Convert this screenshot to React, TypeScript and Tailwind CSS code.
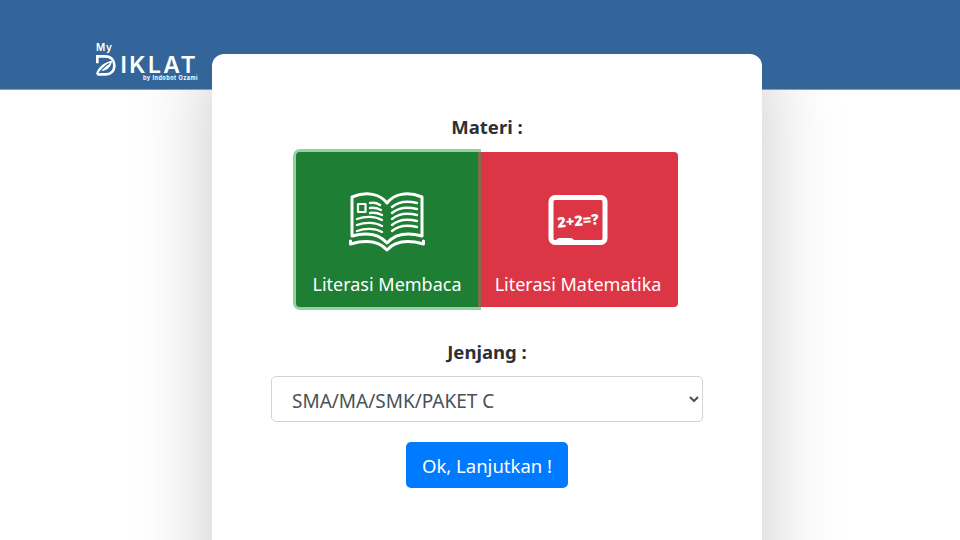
const font = { fontFamily: '"Noto Sans", "Open Sans", sans-serif' };

function BookIcon() {
  return (
    <svg width="76" height="62" viewBox="0 0 76 62" fill="none" stroke="white" strokeWidth="3" strokeLinecap="round" strokeLinejoin="round">
      {/* pages */}
      <path d="M3 7V46C18 42 30 44 38 53C46 44 58 42 73 46V7C58 1 45 4 38 13C31 4 18 1 3 7Z" />
      {/* cover */}
      <path d="M1.500 51V54C16 50 30 51 38 60C46 51 60 50 74.500 54V51" />
      {/* left page */}
      <rect x="9" y="14" width="7.500" height="8" strokeWidth="2.200" />
      <path d="M21 13C24 12.500 28 13 31 15M21 18C24 17.500 28 18 32 20M21 23C25 22.500 29 23 33 25" strokeWidth="2.400" />
      <path d="M8 29C16 26 26 26 33 30M8 35C16 32 26 32 33 36M8 41C16 38 26 38 33 42" strokeWidth="2.400" />
      {/* right page */}
      <path d="M43 17C50 11 60 11 68 13M43 23C50 17 60 17 68 19M43 29C50 23 60 23 68 25M43 35C50 29 60 29 68 31M43 41C50 35 60 35 68 37" strokeWidth="2.400" />
    </svg>
  );
}

function BoardIcon() {
  return (
    <svg width="60" height="50" viewBox="0 0 60 50">
      <rect x="3" y="2.500" width="54" height="45" rx="4" fill="none" stroke="white" strokeWidth="5" />
      <path d="M7 50C7 45 9 43 12 43H22C25 43 27 45 28 50Z" fill="white" />
      <text x="30" y="31" fill="white" fontSize="14.500" fontWeight="900" textAnchor="middle" transform="rotate(-5 30 26)" fontFamily="'Noto Sans', sans-serif">
        2+2=?
      </text>
    </svg>
  );
}

function Logo() {
  return (
    <div className="w-[102px] text-white" style={{ fontFamily: 'Inter, sans-serif' }}>
      <div className="h-[12px] text-[10px] leading-[12px] font-semibold tracking-[0.6px]">My</div>
      <div className="flex items-start">
        <svg width="24" height="24" viewBox="0 0 24 24" fill="none" className="-mb-[3px]">
          {/* D outline, open at the left */}
          <path d="M1.500 10V2.500H10C17 2.500 20.500 7 20.500 12.500C20.500 18 17 22.500 10 22.500H1.500" stroke="white" strokeWidth="3" />
          {/* leaf */}
          <path d="M0 22C2 15 8 9.500 18 7C17 14 12 19 5 18.500C4 19.500 3 21 2 23Z" fill="white" />
          <path d="M3.500 21C6.500 16 10 13 15 10" stroke="#33659a" strokeWidth="1.300" />
        </svg>
        <span className="mt-[3px] ml-[3px] text-[23px] leading-[18px] font-semibold tracking-[2.400px]">IKLAT</span>
      </div>
      <div className="mt-[1px] text-right text-[5.500px] leading-[6px] font-bold tracking-[0.5px]">by Indobot Ozami</div>
    </div>
  );
}

export default function App() {
  return (
    <div className="relative h-screen overflow-hidden bg-white text-[#212529]" style={font}>
      {/* shadow stays under the header */}
      <div className="absolute top-[54px] left-[212px] h-[600px] w-[550px] rounded-xl shadow-[0_0_80px_rgba(0,0,0,0.22)]" />

      <header className="relative z-10 flex h-[90px] items-start border-b border-[#7f9fc2] bg-[#33659a] pt-[41px] pl-[96px]">
        <Logo />
      </header>

      <main className="relative z-20 -mt-[36px] ml-[212px] flex w-[550px] flex-col items-center rounded-xl bg-white pt-[59px] pb-[60px]">
        <label className="text-[18.500px] leading-[27px] font-bold text-[#2b3035]">Materi :</label>

        <div className="mt-[12px] flex">
          <button
            type="button"
            className="relative z-10 flex h-[155px] w-[182px] flex-col items-center rounded-l-[4px] bg-[#1e7e34] pt-[38px] text-[18px] text-white shadow-[0_0_0_3px_rgba(40,167,69,0.5)]"
          >
            <BookIcon />
            <span className="mt-[19px] leading-[26px]">Literasi Membaca</span>
          </button>
          <button
            type="button"
            className="flex h-[155px] w-[200px] flex-col items-center rounded-r-[4px] bg-[#dc3545] pt-[43px] text-[18px] text-white"
          >
            <BoardIcon />
            <span className="mt-[26px] leading-[26px]">Literasi Matematika</span>
          </button>
        </div>

        <label className="mt-[31px] text-[18.500px] leading-[27px] font-bold text-[#2b3035]">Jenjang :</label>

        <select
          defaultValue="c"
          className="mt-[11px] h-[46px] w-[432px] rounded-[5px] border border-[#ced4da] bg-white pt-[3px] pl-[16px] text-[19px] text-[#495057]"
        >
          <option value="c">SMA/MA/SMK/PAKET C</option>
        </select>

        <button type="button" className="mt-[20px] h-[46px] w-[162px] rounded-[5px] bg-[#007bff] pt-[1px] text-[18.500px] text-white">
          Ok, Lanjutkan !
        </button>
      </main>
    </div>
  );
}
